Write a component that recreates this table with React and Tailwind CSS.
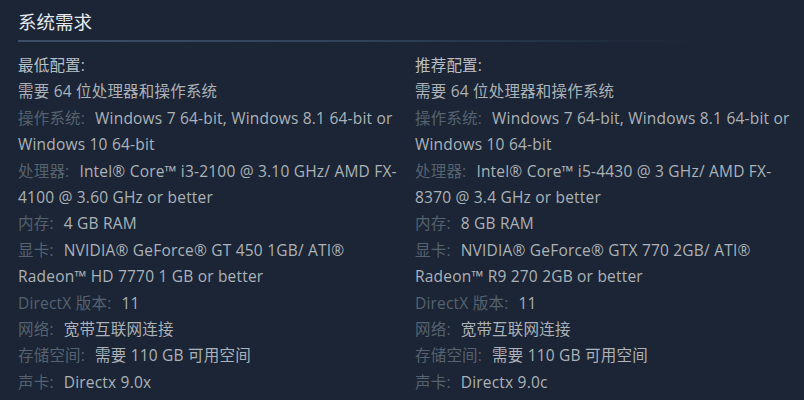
const minimum = [
  { label: null, value: '需要 64 位处理器和操作系统' },
  { label: '操作系统:', value: 'Windows 7 64-bit, Windows 8.1 64-bit or Windows 10 64-bit' },
  { label: '处理器:', value: 'Intel® Core™ i3-2100 @ 3.10 GHz/ AMD FX-4100 @ 3.60 GHz or better' },
  { label: '内存:', value: '4 GB RAM' },
  { label: '显卡:', value: 'NVIDIA® GeForce® GT 450 1GB/ ATI® Radeon™ HD 7770 1 GB or better' },
  { label: 'DirectX 版本:', value: '11' },
  { label: '网络:', value: '宽带互联网连接' },
  { label: '存储空间:', value: '需要 110 GB 可用空间' },
  { label: '声卡:', value: 'Directx 9.0x' },
];

const recommended = [
  { label: null, value: '需要 64 位处理器和操作系统' },
  { label: '操作系统:', value: 'Windows 7 64-bit, Windows 8.1 64-bit or Windows 10 64-bit' },
  { label: '处理器:', value: 'Intel® Core™ i5-4430 @ 3 GHz/ AMD FX-8370 @ 3.4 GHz or better' },
  { label: '内存:', value: '8 GB RAM' },
  { label: '显卡:', value: 'NVIDIA® GeForce® GTX 770 2GB/ ATI® Radeon™ R9 270 2GB or better' },
  { label: 'DirectX 版本:', value: '11' },
  { label: '网络:', value: '宽带互联网连接' },
  { label: '存储空间:', value: '需要 110 GB 可用空间' },
  { label: '声卡:', value: 'Directx 9.0c' },
];

function Column({ title, items }) {
  return (
    <div className="w-[386px] shrink-0">
      <div className="text-[#b8bec4] leading-[26.4px]">{title}</div>
      <ul>
        {items.map((item, i) => (
          <li key={i} className="leading-[26.4px] text-[#acb2b8]">
            {item.label && <span className="text-[#56626f] mr-[10px]">{item.label}</span>}
            {item.value}
          </li>
        ))}
      </ul>
    </div>
  );
}

export default function App() {
  return (
    <div
      className="w-[804px] h-[400px] overflow-hidden bg-[#1b2535] pl-[18px] pt-[9px] text-[15.5px] tracking-[0.2px]"
      style={{ fontFamily: '"Open Sans", "Noto Sans CJK SC", sans-serif' }}
    >
      <h2 className="text-[18.5px] text-[#e6eaee] leading-[26px] tracking-normal">系统需求</h2>
      <div className="mt-[5px] h-[2px] w-[680px] bg-gradient-to-r from-[#3b5068] via-[#2f4258] to-transparent" />
      <div className="mt-[10px] flex gap-[11px]">
        <Column title="最低配置:" items={minimum} />
        <Column title="推荐配置:" items={recommended} />
      </div>
    </div>
  );
}
